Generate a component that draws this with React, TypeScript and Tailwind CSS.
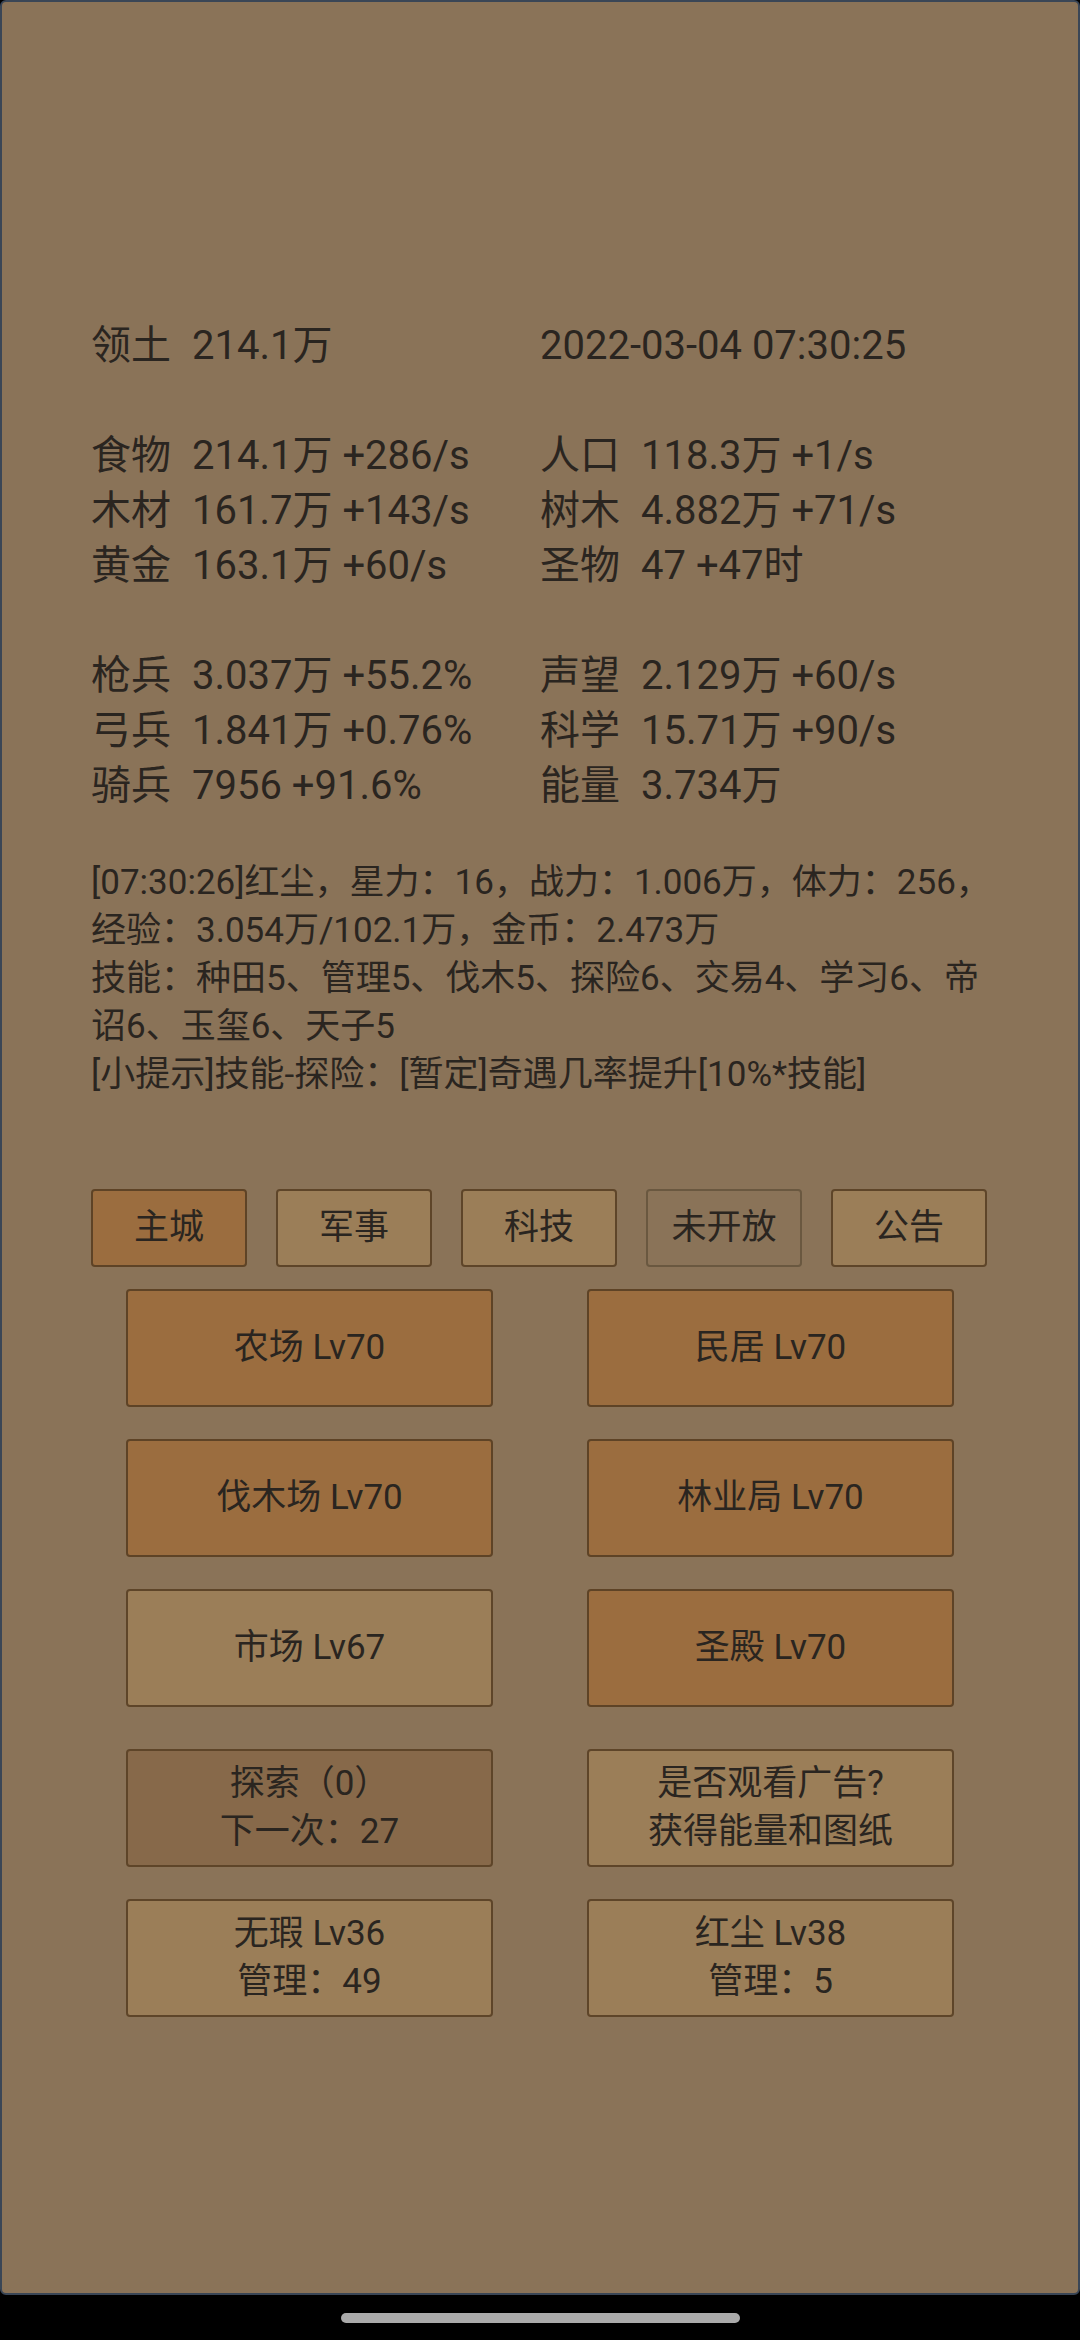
import React from "react";

const font = { fontFamily: "Roboto, 'Noto Sans CJK SC', sans-serif" };

type Stat = { label?: string; value: string };

const statRows: ([Stat, Stat] | null)[] = [
  [
    { label: "领土", value: "214.1万" },
    { value: "2022-03-04 07:30:25" },
  ],
  null,
  [
    { label: "食物", value: "214.1万 +286/s" },
    { label: "人口", value: "118.3万 +1/s" },
  ],
  [
    { label: "木材", value: "161.7万 +143/s" },
    { label: "树木", value: "4.882万 +71/s" },
  ],
  [
    { label: "黄金", value: "163.1万 +60/s" },
    { label: "圣物", value: "47 +47时" },
  ],
  null,
  [
    { label: "枪兵", value: "3.037万 +55.2%" },
    { label: "声望", value: "2.129万 +60/s" },
  ],
  [
    { label: "弓兵", value: "1.841万 +0.76%" },
    { label: "科学", value: "15.71万 +90/s" },
  ],
  [
    { label: "骑兵", value: "7956 +91.6%" },
    { label: "能量", value: "3.734万" },
  ],
];

const logLines = [
  "[07:30:26]红尘，星力：16，战力：1.006万，体力：256，",
  "经验：3.054万/102.1万，金币：2.473万",
  "技能：种田5、管理5、伐木5、探险6、交易4、学习6、帝",
  "诏6、玉玺6、天子5",
  "[小提示]技能-探险：[暂定]奇遇几率提升[10%*技能]",
];

const tabs = [
  { name: "主城", tone: "active" },
  { name: "军事", tone: "normal" },
  { name: "科技", tone: "normal" },
  { name: "未开放", tone: "disabled" },
  { name: "公告", tone: "normal" },
];

const toneClass: Record<string, string> = {
  active: "bg-[#9b6d3f] border-[#5e4326]",
  normal: "bg-[#9b7e58] border-[#5e4529]",
  disabled: "bg-[#8a7358] border-[#6a5840]",
  pressed: "bg-[#87694a] border-[#5e4529]",
};

const buildings: { lines: string[]; tone: string }[] = [
  { lines: ["农场 Lv70"], tone: "active" },
  { lines: ["民居 Lv70"], tone: "active" },
  { lines: ["伐木场 Lv70"], tone: "active" },
  { lines: ["林业局 Lv70"], tone: "active" },
  { lines: ["市场 Lv67"], tone: "normal" },
  { lines: ["圣殿 Lv70"], tone: "active" },
];

const actions: { lines: string[]; tone: string }[] = [
  { lines: ["探索（0）", "下一次：27"], tone: "pressed" },
  { lines: ["是否观看广告?", "获得能量和图纸"], tone: "normal" },
  { lines: ["无瑕 Lv36", "管理：49"], tone: "normal" },
  { lines: ["红尘 Lv38", "管理：5"], tone: "normal" },
];

function StatCell({ stat }: { stat: Stat }) {
  return (
    <div className="flex whitespace-nowrap">
      {stat.label && <span className="w-[80px] mr-[21px]">{stat.label}</span>}
      <span>{stat.value}</span>
    </div>
  );
}

function GameButton({ lines, tone }: { lines: string[]; tone: string }) {
  return (
    <div
      className={`flex h-[118px] flex-col items-center justify-center rounded-[4px] border-2 text-[35px] leading-[48px] text-[#2a2520] ${toneClass[tone]}`}
    >
      {lines.map((l) => (
        <div key={l}>{l}</div>
      ))}
    </div>
  );
}

export default function App() {
  return (
    <div className="flex h-[2340px] w-[1080px] flex-col bg-black" style={font}>
      <div className="h-[2295px] rounded-[6px] border-2 border-[#3a4656] bg-[#8a7358] text-[#2a2520]">
        {/* STATS */}
        <div className="pl-[89px] pt-[316px] text-[40px] leading-[55px]">
          {statRows.map((row, i) =>
            row ? (
              <div key={i} className="grid grid-cols-[449px_1fr]">
                <StatCell stat={row[0]} />
                <StatCell stat={row[1]} />
              </div>
            ) : (
              <div key={i} className="h-[55px]" />
            )
          )}
        </div>

        {/* LOG */}
        <div className="mt-[46px] pl-[89px] text-[35px] leading-[48px]">
          {logLines.map((l) => (
            <div key={l} className="whitespace-nowrap">
              {l}
            </div>
          ))}
        </div>

        {/* TABS */}
        <div className="mt-[90px] flex gap-[29px] pl-[89px]">
          {tabs.map((t) => (
            <div
              key={t.name}
              className={`flex h-[78px] w-[156px] items-center justify-center rounded-[4px] border-2 text-[35px] ${toneClass[t.tone]}`}
            >
              {t.name}
            </div>
          ))}
        </div>

        {/* BUILDINGS */}
        <div className="mt-[22px] grid grid-cols-[367px_367px] justify-center gap-x-[94px] gap-y-[32px]">
          {buildings.map((b) => (
            <GameButton key={b.lines[0]} lines={b.lines} tone={b.tone} />
          ))}
        </div>

        {/* ACTIONS */}
        <div className="mt-[42px] grid grid-cols-[367px_367px] justify-center gap-x-[94px] gap-y-[32px]">
          {actions.map((b) => (
            <GameButton key={b.lines[0]} lines={b.lines} tone={b.tone} />
          ))}
        </div>
      </div>

      {/* HOME INDICATOR */}
      <div className="flex flex-1 items-center justify-center">
        <div className="h-[10px] w-[399px] rounded-full bg-[#aaaaaa]" />
      </div>
    </div>
  );
}
